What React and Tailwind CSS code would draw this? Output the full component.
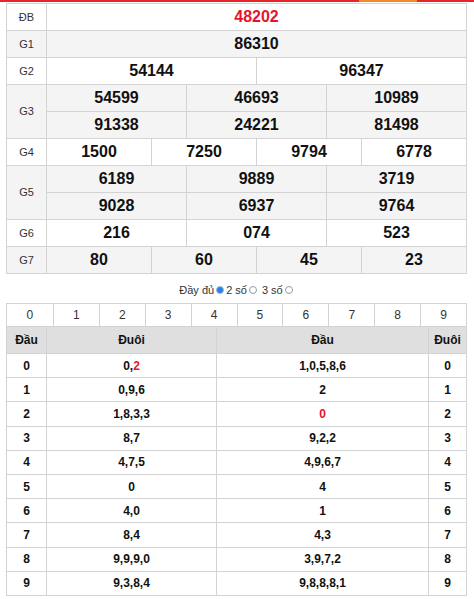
import React from "react";

const RED = "text-[#e5162b]";

const prizes = [
  { label: "ĐB", rows: [["48202"]], red: true },
  { label: "G1", rows: [["86310"]] },
  { label: "G2", rows: [["54144", "96347"]] },
  { label: "G3", rows: [["54599", "46693", "10989"], ["91338", "24221", "81498"]] },
  { label: "G4", rows: [["1500", "7250", "9794", "6778"]] },
  { label: "G5", rows: [["6189", "9889", "3719"], ["9028", "6937", "9764"]] },
  { label: "G6", rows: [["216", "074", "523"]] },
  { label: "G7", rows: [["80", "60", "45", "23"]] },
];

const duoi = [
  [["0"], ["2", true]],
  [["0,9,6"]],
  [["1,8,3,3"]],
  [["8,7"]],
  [["4,7,5"]],
  [["0"]],
  [["4,0"]],
  [["8,4"]],
  [["9,9,9,0"]],
  [["9,3,8,4"]],
];

const dau = [
  [["1,0,5,8,6"]],
  [["2"]],
  [["0", true]],
  [["9,2,2"]],
  [["4,9,6,7"]],
  [["4"]],
  [["1"]],
  [["4,3"]],
  [["3,9,7,2"]],
  [["9,8,8,8,1"]],
];

function Parts({ parts }) {
  return parts.map(([text, red], i) => (
    <React.Fragment key={i}>
      {i > 0 && ","}
      <span className={red ? RED : ""}>{text}</span>
    </React.Fragment>
  ));
}

function PrizeRow({ prize, index }) {
  const bg = index % 2 === 1 ? "bg-[#f4f4f4]" : "bg-white";
  const tall = prize.rows.length > 1;
  return (
    <div className={`flex border-b border-[#d3d3d3] ${bg} ${tall ? "h-[54px]" : "h-[27px]"}`}>
      <div className="w-[40px] shrink-0 border-r border-[#d3d3d3] flex items-center justify-center text-[11px] text-[#333]">
        {prize.label}
      </div>
      <div className="flex-1 flex flex-col">
        {prize.rows.map((nums, r) => (
          <div
            key={r}
            className={`flex ${r === 0 && tall ? "h-[27px] border-b border-[#d3d3d3]" : "flex-1"}`}
          >
            {nums.map((n, c) => (
              <div
                key={c}
                className={`flex-1 basis-0 flex items-center justify-center text-[16px] font-bold ${
                  prize.red ? RED : "text-[#111]"
                } ${c > 0 ? "border-l border-[#d3d3d3]" : ""}`}
              >
                {n}
              </div>
            ))}
          </div>
        ))}
      </div>
    </div>
  );
}

function Radio({ checked }) {
  return checked ? (
    <span className="mx-[2px] inline-flex w-[8px] h-[8px] rounded-full border border-[#8fbbec] bg-[#2b7de0]" />
  ) : (
    <span className="mx-[2px] inline-flex w-[8px] h-[8px] rounded-full border border-[#9a9a9a] bg-white" />
  );
}

export default function App() {
  return (
    <div className="w-[474px] h-[599px] bg-white font-['Liberation_Sans',Arial,sans-serif] overflow-hidden">
      <div className="flex h-[2px]">
        <div className="w-[359px] bg-[#e8252b]" />
        <div className="w-[58px] bg-[#f4892c]" />
        <div className="flex-1 bg-[#e8252b]" />
      </div>

      <div className="ml-[6px] mt-[1px] w-[461px] border-x border-t border-[#d3d3d3]">
        {prizes.map((p, i) => (
          <PrizeRow key={p.label} prize={p} index={i} />
        ))}
      </div>

      <div className="h-[29px] pt-[3px] flex items-center justify-center text-[11px] text-[#333]">
        <span>Đầy đủ</span>
        <Radio checked />
        <span>2 số</span>
        <Radio />
        <span className="ml-[3px]">3 số</span>
        <Radio />
      </div>

      <div className="ml-[6px] w-[461px] border-x border-t border-[#d3d3d3]">
        <div className="grid grid-cols-10 h-[23px] border-b border-[#d3d3d3] text-[12px] text-[#333]">
          {[0, 1, 2, 3, 4, 5, 6, 7, 8, 9].map((d) => (
            <div
              key={d}
              className={`flex items-center justify-center ${d > 0 ? "border-l border-[#d3d3d3]" : ""}`}
            >
              {d}
            </div>
          ))}
        </div>

        <div className="flex h-[27px] border-b border-[#d3d3d3] bg-[#dfdfdf] text-[12px] font-bold text-[#111]">
          <div className="w-[40px] border-r border-[#d3d3d3] flex items-center justify-center">Đầu</div>
          <div className="w-[170px] border-r border-[#d3d3d3] flex items-center justify-center">Đuôi</div>
          <div className="w-[212px] border-r border-[#d3d3d3] flex items-center justify-center">Đầu</div>
          <div className="flex-1 flex items-center justify-center">Đuôi</div>
        </div>

        {duoi.map((parts, i) => (
          <div key={i} className="flex h-[24.2px] border-b border-[#d3d3d3] text-[12px] font-bold text-[#111]">
            <div className="w-[40px] border-r border-[#d3d3d3] flex items-center justify-center">{i}</div>
            <div className="w-[170px] border-r border-[#d3d3d3] flex items-center justify-center">
              <Parts parts={parts} />
            </div>
            <div className="w-[212px] border-r border-[#d3d3d3] flex items-center justify-center">
              <Parts parts={dau[i]} />
            </div>
            <div className="flex-1 flex items-center justify-center">{i}</div>
          </div>
        ))}
      </div>
    </div>
  );
}
